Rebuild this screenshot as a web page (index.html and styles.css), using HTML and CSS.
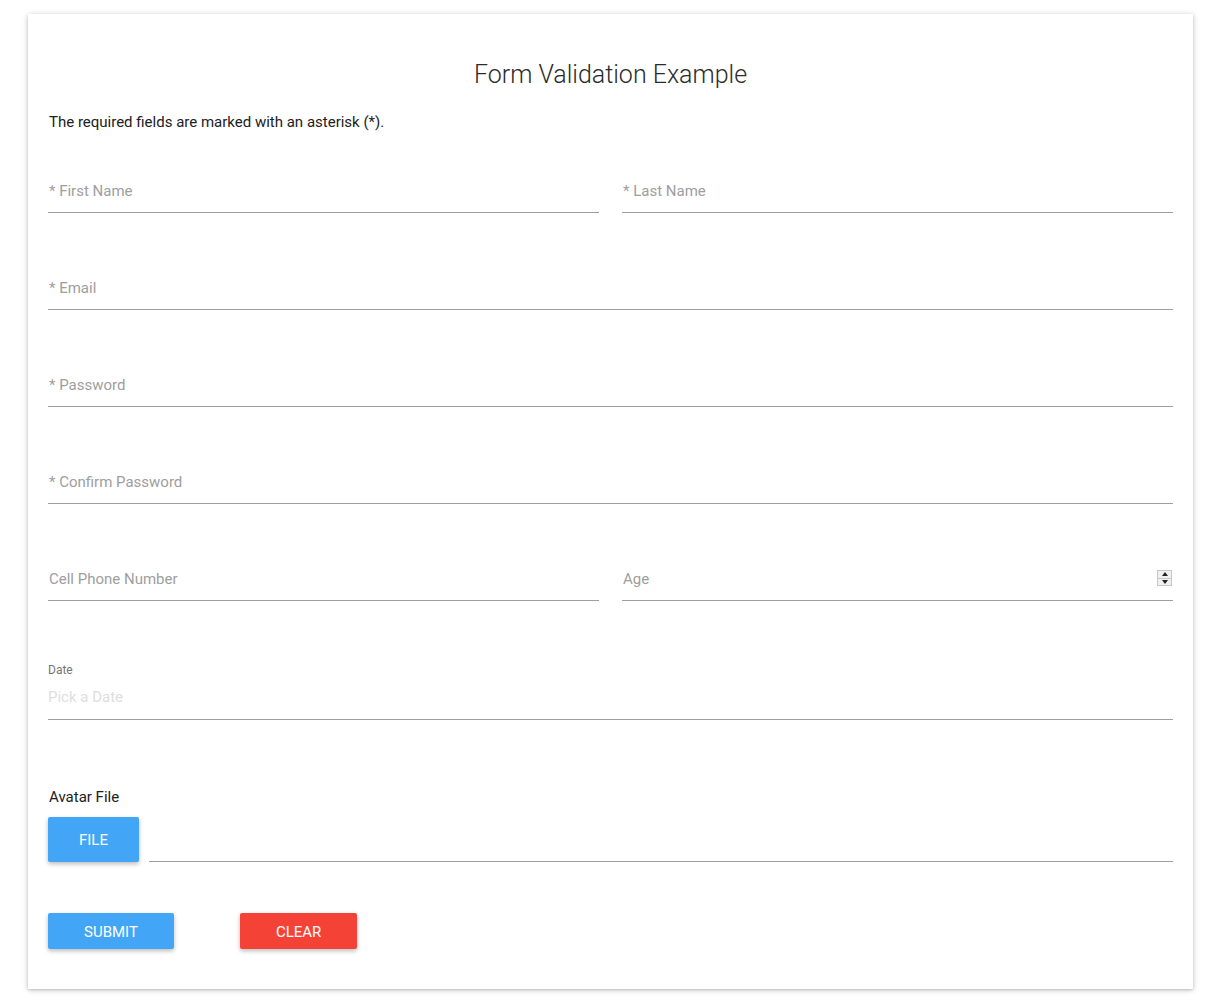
FILE: index.html
```html
<!DOCTYPE html>
<html lang="en">
<head>
<meta charset="utf-8">
<title>Form Validation Example</title>
<link rel="stylesheet" href="styles.css">
</head>
<body>
<div class="card">
  <h1 class="title">Form Validation Example</h1>
  <p class="note">The required fields are marked with an asterisk (*).</p>

  <div class="row two">
    <div class="field"><span class="ph">* First Name</span></div>
    <div class="field"><span class="ph">* Last Name</span></div>
  </div>
  <div class="row">
    <div class="field"><span class="ph">* Email</span></div>
  </div>
  <div class="row">
    <div class="field"><span class="ph">* Password</span></div>
  </div>
  <div class="row">
    <div class="field"><span class="ph">* Confirm Password</span></div>
  </div>
  <div class="row two">
    <div class="field"><span class="ph">Cell Phone Number</span></div>
    <div class="field number"><span class="ph">Age</span>
      <span class="spin"><span class="up"></span><span class="down"></span></span>
    </div>
  </div>
  <div class="row">
    <div class="field date">
      <span class="small">Date</span>
      <span class="ph light">Pick a Date</span>
    </div>
  </div>

  <div class="avatar-label">Avatar File</div>
  <div class="file-row">
    <button class="btn blue file">FILE</button>
    <div class="file-line"></div>
  </div>

  <div class="actions">
    <button class="btn blue act">SUBMIT</button>
    <button class="btn red act">CLEAR</button>
  </div>
</div>
</body>
</html>
```
FILE: styles.css
```css
* { box-sizing: border-box; }
html, body { margin: 0; background: #fff; }
body {
  padding: 14px 31px 18px 28px;
  font-family: Roboto, "Liberation Sans", Arial, sans-serif;
  color: #212121;
}
.card {
  background: #fff;
  box-shadow: 0 1px 6px rgba(0,0,0,0.22), 0 1px 2px rgba(0,0,0,0.12);
  padding: 45px 20px 40px 20px;
}
.title {
  margin: 0;
  text-align: center;
  font-weight: 300;
  font-size: 25px;
  line-height: 32px;
  color: #2b2b2b;
}
.note {
  margin: 21px 0 0 1px;
  font-size: 15px;
  line-height: 20px;
}
.row { margin-top: 49px; }
.note + .row { margin-top: 33px; }
.row.two {
  display: grid;
  grid-template-columns: 1fr 1fr;
  column-gap: 23px;
}
.field {
  height: 48px;
  border-bottom: 1px solid #9e9e9e;
  display: flex;
  align-items: flex-end;
  padding: 0 0 10px 1px;
  position: relative;
}
.ph {
  font-size: 15px;
  line-height: 22px;
  color: #9e9e9e;
}
.ph.light { color: #dedede; }
.field.number { justify-content: space-between; }
.spin {
  display: flex;
  flex-direction: column;
  width: 15px;
  height: 16px;
  margin: 0 1px 4px 0;
  border: 1px solid #c8c8c8;
  background: #f0f0f0;
}
.spin .up, .spin .down {
  flex: 1;
  display: flex;
  align-items: center;
  justify-content: center;
}
.spin .down { border-top: 1px solid #c8c8c8; }
.spin .up::before {
  content: "";
  border-left: 3px solid transparent;
  border-right: 3px solid transparent;
  border-bottom: 4px solid #222;
}
.spin .down::before {
  content: "";
  border-left: 3px solid transparent;
  border-right: 3px solid transparent;
  border-top: 4px solid #222;
}
.field.date {
  height: 70px;
  flex-direction: column;
  align-items: flex-start;
  justify-content: flex-end;
  padding: 11px 0 11px 0;
}
.small {
  font-size: 12px;
  line-height: 16px;
  color: #757575;
  margin-bottom: 8px;
}
.avatar-label {
  margin-top: 66px;
  padding-left: 1px;
  font-size: 15px;
  line-height: 22px;
  color: #212121;
}
.file-row {
  display: flex;
  align-items: flex-end;
  margin-top: 9px;
  gap: 10px;
}
.file-line {
  flex: 1;
  border-bottom: 1px solid #9e9e9e;
}
.btn {
  border: 0;
  border-radius: 2px;
  color: #fff;
  font-family: Roboto, "Liberation Sans", Arial, sans-serif;
  font-size: 15px;
  font-weight: 400;
  line-height: 20px;
  text-transform: uppercase;
  box-shadow: 0 2px 5px rgba(0,0,0,0.16), 0 2px 4px rgba(0,0,0,0.12);
  cursor: pointer;
}
.blue { background: #42a5f5; }
.red { background: #f44336; }
.file {
  height: 45px;
  width: 91px;
  padding: 0;
}
.actions {
  display: flex;
  gap: 66px;
  margin-top: 51px;
}
.act {
  height: 36px;
  padding: 2px 36px 0;
}
```
